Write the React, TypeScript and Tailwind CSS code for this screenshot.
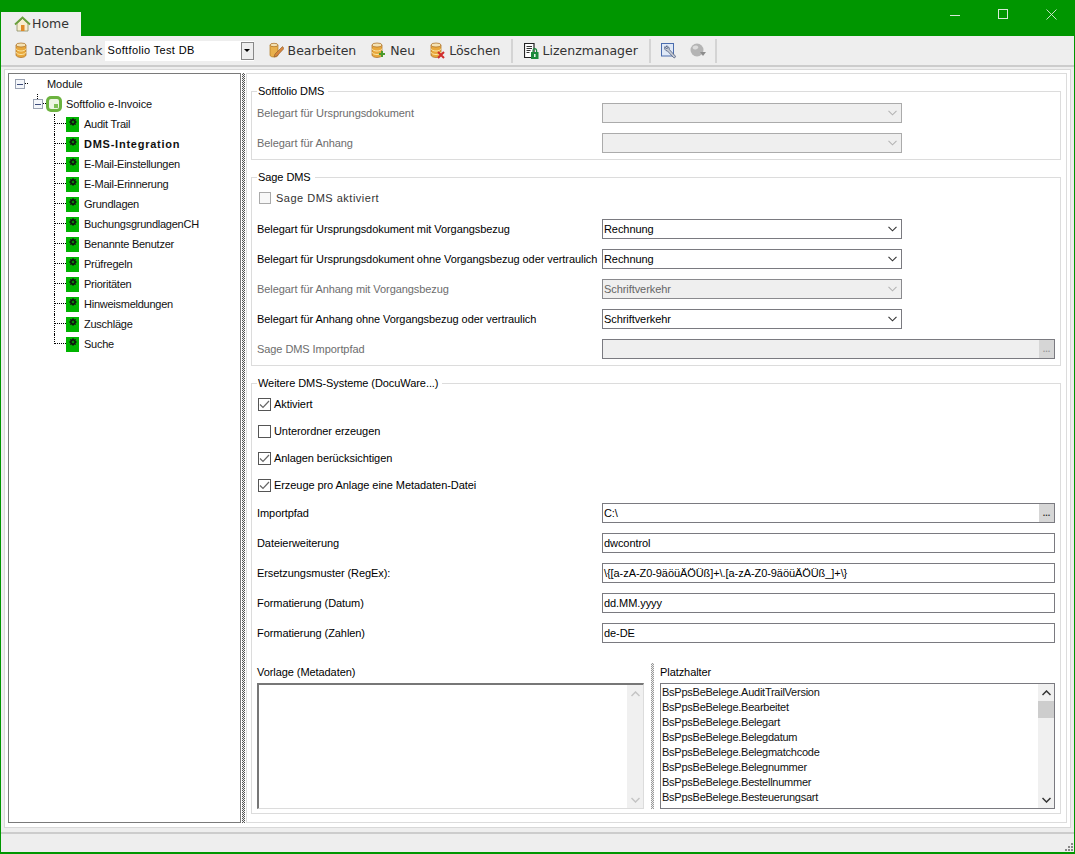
import type { ReactNode } from "react";

const treeItems = [
  "Audit Trail",
  "DMS-Integration",
  "E-Mail-Einstellungen",
  "E-Mail-Erinnerung",
  "Grundlagen",
  "BuchungsgrundlagenCH",
  "Benannte Benutzer",
  "Prüfregeln",
  "Prioritäten",
  "Hinweismeldungen",
  "Zuschläge",
  "Suche",
];

const placeholders = [
  "AuditTrailVersion",
  "Bearbeitet",
  "Belegart",
  "Belegdatum",
  "Belegmatchcode",
  "Belegnummer",
  "Bestellnummer",
  "Besteuerungsart",
  "Betrag",
];

function Db({ children }: { children?: ReactNode }) {
  return (
    <svg width="16" height="17" viewBox="0 0 16 17" className="shrink-0">
      <path d="M2 3v10c0 1.500 2.500 2.500 5 2.500s5-1 5-2.500V3z" fill="#e8a83c" stroke="#a8681c" strokeWidth="0.7" />
      <path d="M2 6.500c0 1.500 2.500 2.500 5 2.500s5-1 5-2.500M2 10c0 1.500 2.500 2.500 5 2.500s5-1 5-2.500" fill="none" stroke="#fbe7a8" />
      <ellipse cx="7" cy="3" rx="5" ry="2" fill="#f4e2b4" stroke="#a8681c" strokeWidth="0.7" />
      {children}
    </svg>
  );
}

function HomeIcon() {
  return (
    <svg width="17" height="16" viewBox="0 0 17 16" className="shrink-0">
      <path d="M3 7.500V15h11V7.500L8.500 2.500z" fill="#f6edd0" stroke="#8a8a60" strokeWidth="0.8" />
      <path d="M1 8.500 8.500 1.500 16 8.500" fill="none" stroke="#6aa03c" strokeWidth="1.800" />
      <rect x="7" y="9" width="3.500" height="6" fill="#e08a28" />
    </svg>
  );
}

function DocLockIcon() {
  return (
    <svg width="15" height="16" viewBox="0 0 15 16" className="shrink-0">
      <path d="M.5.500h9.500v14H.5z" fill="#fff" stroke="#222" strokeWidth="1.200" />
      <path d="M2.500 3.500h5.500M2.500 5.500h5.500M2.500 7.500h4M2.500 9.500h3" stroke="#333" strokeWidth="1" />
      <rect x="7" y="9" width="7.500" height="7" fill="#1c8a3c" />
      <path d="M9 9V7.500a1.800 1.800 0 0 1 3.600 0V9" fill="none" stroke="#1c8a3c" strokeWidth="1.200" />
      <path d="M10.800 11v3" stroke="#fff" strokeWidth="1.400" />
    </svg>
  );
}

function WrenchIcon() {
  return (
    <svg width="16" height="16" viewBox="0 0 16 16" className="shrink-0">
      <rect x=".5" y=".5" width="12" height="12.500" fill="#dfe8f6" stroke="#4a6cae" />
      <path d="M4 3.500a3 3 0 0 0 2.500 4.500l6 6.500c1 .8 2.500-.3 1.800-1.500L8.300 6.500A3 3 0 0 0 5 3l1.700 1.800-1 1.200z" fill="#c8ccd4" stroke="#4a5a7c" strokeWidth="0.8" />
    </svg>
  );
}

function GlobeIcon() {
  return (
    <svg width="16" height="16" viewBox="0 0 16 16" className="shrink-0">
      <circle cx="7" cy="7" r="6.500" fill="#b4b4b4" />
      <path d="M3 3.500c2-1.500 4-1.500 5 0s-1 3-3 3-3-1.500-2-3z" fill="#dcdcdc" />
      <path d="M10 9h6l-3 4z" fill="#8c8c8c" />
    </svg>
  );
}

function NodeIcon() {
  return (
    <span className="flex h-[15px] w-[13px] shrink-0 justify-center bg-[#00b400] pt-px">
      <svg width="8" height="8" viewBox="0 0 8 8">
        <circle cx="4" cy="4" r="2.200" fill="none" stroke="#111" strokeWidth="1.500" />
        <path d="M4 0v8M0 4h8M1.200 1.200l5.600 5.600M6.800 1.200 1.200 6.800" stroke="#111" strokeWidth="0.900" />
        <circle cx="4" cy="4" r="1" fill="#00b400" />
      </svg>
    </span>
  );
}

function LogoIcon() {
  return (
    <span className="flex size-4 shrink-0 items-center justify-center rounded-[5px] bg-[#6cb33f]">
      <span className="flex size-[10px] items-end justify-end rounded-[2px] bg-[#eef5e4] p-px">
        <span className="size-1 bg-[#7fbf55]" />
      </span>
    </span>
  );
}

function Expander({ stem }: { stem?: boolean }) {
  return (
    <span className="relative flex size-[10px] shrink-0 items-center justify-center border border-[#9aa2b2] bg-[#f4f6fa]">
      <span className="h-px w-[6px] bg-[#3c4c7c]" />
      <span className="absolute left-[9px] top-[3px] w-[3px] border-b border-dotted border-black" />
      {stem ? <span className="absolute -top-[6px] left-[3px] h-[5px] border-l border-dotted border-black" /> : null}
    </span>
  );
}

function Chevron({ disabled }: { disabled?: boolean }) {
  return (
    <svg width="9" height="6" viewBox="0 0 9 6" className="shrink-0">
      <path d="M.5.800 4.500 4.800 8.500.800" fill="none" stroke={disabled ? "#b4b4b4" : "#333"} strokeWidth="1.100" />
    </svg>
  );
}

function Combo({ value, disabled }: { value?: string; disabled?: boolean }) {
  const boxClass = disabled
    ? value
      ? "border-[#8a8a8e] bg-[#efefef] text-[#666]"
      : "border-[#ababab] bg-[#efefef]"
    : "border-[#7a7a80] bg-white text-black";
  return (
    <div className={`flex h-5 w-[300px] shrink-0 items-center justify-between border pl-[1px] pr-[4px] ${boxClass}`}>
      <span>{value}</span>
      <Chevron disabled={disabled} />
    </div>
  );
}

function DotsButton({ disabled }: { disabled?: boolean }) {
  return (
    <span
      className={`flex h-[18px] w-[15px] shrink-0 items-center justify-center bg-[#d6d6d6] text-[9px] font-bold leading-none ${disabled ? "text-[#999]" : "text-[#333]"}`}
    >
      ...
    </span>
  );
}

function TextField({ value, browse, disabled }: { value?: string; browse?: boolean; disabled?: boolean }) {
  return (
    <div
      className={`flex h-5 min-w-0 flex-1 items-center justify-between border border-[#7a7a80] pl-[1px] ${disabled ? "bg-[#efefef]" : "bg-white"}`}
    >
      <span className="whitespace-pre">{value}</span>
      {browse ? <DotsButton disabled={disabled} /> : null}
    </div>
  );
}

function Row({ label, muted, children }: { label: string; muted?: boolean; children: ReactNode }) {
  return (
    <div className="flex h-5 items-center">
      <span className={`w-[345px] shrink-0 whitespace-nowrap ${muted ? "text-[#6d6d6d]" : "text-black"}`}>{label}</span>
      {children}
    </div>
  );
}

function CheckRow({ label, checked }: { label: string; checked?: boolean }) {
  return (
    <div className="flex h-[27px] items-center gap-[3px]">
      <span className="ml-px flex size-[13px] shrink-0 items-center justify-center border border-[#555] bg-white">
        {checked ? (
          <svg width="11" height="9" viewBox="0 0 11 9">
            <path d="M1 4.500 4 7.500 10 1" fill="none" stroke="#666" strokeWidth="1.200" />
          </svg>
        ) : null}
      </span>
      <span>{label}</span>
    </div>
  );
}

function Group({ title, className, children }: { title: string; className?: string; children: ReactNode }) {
  return (
    <fieldset className={`min-w-0 border border-[#dcdcdc] pl-[5px] pr-[5px] ${className ?? ""}`}>
      <legend className="px-[1px] pr-1 leading-4 text-black">{title}</legend>
      {children}
    </fieldset>
  );
}

function Arrow({ up, light }: { up?: boolean; light?: boolean }) {
  return (
    <span className="flex h-[17px] items-center justify-center">
      <svg width="9" height="6" viewBox="0 0 9 6">
        <path
          d={up ? "M.5 5 4.500 1 8.500 5" : "M.5 1 4.500 5 8.500 1"}
          fill="none"
          stroke={light ? "#c4c4c4" : "#333"}
          strokeWidth="1.500"
        />
      </svg>
    </span>
  );
}

function Tree() {
  return (
    <div className="flex w-[233px] shrink-0 flex-col border border-[#7a7a7a] bg-white pl-[6px] text-[#111]">
      <div className="flex h-5 items-center">
        <Expander />
        <span className="ml-[22px]">Module</span>
      </div>
      <div className="flex h-5 items-center pl-[18px]">
        <Expander stem />
        <span className="ml-[3px]">
          <LogoIcon />
        </span>
        <span className="ml-[4px]">Softfolio e-Invoice</span>
      </div>
      {treeItems.map((item, index) => (
        <div key={item} className="flex h-5 pl-[39px]">
          <span
            className={`w-[12px] shrink-0 border-l border-dotted border-black ${index === treeItems.length - 1 ? "h-[10px]" : "h-5"}`}
          >
            <span className="block h-[10px] border-b border-dotted border-black" />
          </span>
          <span className="flex items-center gap-[5px]">
            <NodeIcon />
            <span className={item === "DMS-Integration" ? "font-bold tracking-[0.75px]" : "tracking-[-0.25px]"}>
              {item}
            </span>
          </span>
        </div>
      ))}
    </div>
  );
}

function ToolButton({ icon, label }: { icon: ReactNode; label: string }) {
  return (
    <div className="flex items-center gap-[4px]">
      {icon}
      <span className="translate-y-px font-['DejaVu_Sans',sans-serif] text-[12.500px] tracking-normal text-[#333]">
        {label}
      </span>
    </div>
  );
}

function Sep({ className }: { className: string }) {
  return <span className={`h-[24px] w-[2px] shrink-0 bg-[#d4d4d4] ${className}`} />;
}

export default function App() {
  return (
    <div className="flex h-[854px] w-[1075px] flex-col border-b-2 border-l border-r border-[#009600] bg-[#eeeeee] font-['Liberation_Sans',sans-serif] text-[11px] tracking-[-0.07px]">
      <header className="flex h-9 shrink-0 items-end justify-between bg-[#009600]">
        <div className="flex h-6 w-20 items-center gap-[1px] bg-[#eeeeee] pl-[13px] font-['DejaVu_Sans',sans-serif] text-[12.500px] tracking-normal text-[#333]">
          <HomeIcon />
          <span>Home</span>
        </div>
        <div className="flex h-9 items-center pb-[8px] pr-[17px]">
          <span className="mr-[38px] h-px w-[10px] translate-y-[1px] bg-[#d8e8d8]" />
          <span className="mr-[38px] size-[10px] border border-[#d8e8d8]" />
          <svg width="11" height="11" viewBox="0 0 11 11">
            <path d="M.5.500l10 10M10.500.500l-10 10" stroke="#d8e8d8" strokeWidth="0.900" />
          </svg>
        </div>
      </header>

      <div className="flex h-[29px] shrink-0 items-center pl-[13px]">
        <ToolButton icon={<Db />} label="Datenbank" />
        <div className="ml-[2px] flex h-5 w-[149px] items-center justify-between bg-white pl-[3px] text-[11px] tracking-[0.35px]">
          <span>Softfolio Test DB</span>
          <span className="flex h-[18px] w-[13px] items-center justify-center border border-[#888] bg-[#eee]">
            <span className="border-x-[3px] border-t-[3px] border-x-transparent border-t-black" />
          </span>
        </div>
        <div className="ml-[14px] flex items-center gap-[14px]">
          <ToolButton
            icon={
              <svg width="16" height="17" viewBox="0 0 16 17">
                <path d="M2 3v10c0 1.500 2 2 4 2s4-.5 4-2V3z" fill="#e8b04c" stroke="#b07820" strokeWidth="0.7" />
                <ellipse cx="6" cy="3" rx="4" ry="1.700" fill="#f4e2b4" stroke="#a8681c" strokeWidth="0.7" />
                <path d="M14.500 4.500 7 12l-1 3 3-1 7-7.500z" fill="#d8863c" stroke="#8a5a2c" strokeWidth="0.6" />
              </svg>
            }
            label="Bearbeiten"
          />
          <ToolButton
            icon={
              <Db>
                <path d="M12 9v6M9 12h6" stroke="#4c9a2c" strokeWidth="2" />
              </Db>
            }
            label="Neu"
          />
          <ToolButton
            icon={
              <Db>
                <path d="M9 10l6 6M15 10l-6 6" stroke="#d02c2c" strokeWidth="2" />
              </Db>
            }
            label="Löschen"
          />
        </div>
        <Sep className="mx-[10px]" />
        <span className="ml-px flex">
          <ToolButton icon={<DocLockIcon />} label="Lizenzmanager" />
        </span>
        <Sep className="ml-[11px] mr-[10px]" />
        <WrenchIcon />
        <span className="ml-[13px] flex">
          <GlobeIcon />
        </span>
        <Sep className="ml-[9px]" />
      </div>

      <div className="flex min-h-0 flex-1 flex-col border-t-2 border-[#cccccc] px-[3px] pt-[2px]">
        <div className="flex h-[759px] shrink-0 border border-[#d8d8d8] bg-white p-[3px] pb-1">
          <Tree />
          <div className="ml-[1px] w-[3px] shrink-0 bg-[repeating-conic-gradient(#555_0_25%,#eee_0_50%)] bg-[length:2px_2px]" />
          <div className="ml-[1px] min-w-0 flex-1 border border-[#dcdcdc] pl-[4px] pr-[5px] pt-[9px]">
            <Group title="Softfolio DMS" className="pb-[6px]">
              <div className="flex flex-col gap-[10px] pt-1">
                <Row label="Belegart für Ursprungsdokument" muted>
                  <Combo disabled />
                </Row>
                <Row label="Belegart für Anhang" muted>
                  <Combo disabled />
                </Row>
              </div>
            </Group>

            <Group title="Sage DMS" className="mt-[9px] pb-[6px]">
              <div className="flex flex-col gap-[10px] pt-[4px]">
                <div className="flex h-5 -translate-y-px items-center gap-[5px] text-[#333]">
                  <span className="ml-[2px] size-[12px] shrink-0 border border-[#aaa] bg-[#f8f8f8]" />
                  <span className="tracking-[0.5px]">Sage DMS aktiviert</span>
                </div>
                <Row label="Belegart für Ursprungsdokument mit Vorgangsbezug">
                  <Combo value="Rechnung" />
                </Row>
                <Row label="Belegart für Ursprungsdokument ohne Vorgangsbezug oder vertraulich">
                  <Combo value="Rechnung" />
                </Row>
                <Row label="Belegart für Anhang mit Vorgangsbezug" muted>
                  <Combo value="Schriftverkehr" disabled />
                </Row>
                <Row label="Belegart für Anhang ohne Vorgangsbezug oder vertraulich">
                  <Combo value="Schriftverkehr" />
                </Row>
                <Row label="Sage DMS Importpfad" muted>
                  <TextField browse disabled />
                </Row>
              </div>
            </Group>

            <Group title="Weitere DMS-Systeme (DocuWare...)" className="mt-[9px] pb-[4px]">
              <div>
                <CheckRow label="Aktiviert" checked />
                <CheckRow label="Unterordner erzeugen" />
                <CheckRow label="Anlagen berücksichtigen" checked />
                <CheckRow label="Erzeuge pro Anlage eine Metadaten-Datei" checked />
              </div>
              <div className="flex flex-col gap-[10px] pt-[4px]">
                <Row label="Importpfad">
                  <TextField value="C:\" browse />
                </Row>
                <Row label="Dateierweiterung">
                  <TextField value="dwcontrol" />
                </Row>
                <Row label="Ersetzungsmuster (RegEx):">
                  <TextField value="\{[a-zA-Z0-9äöüÄÖÜß]+\.[a-zA-Z0-9äöüÄÖÜß_]+\}" />
                </Row>
                <Row label="Formatierung (Datum)">
                  <TextField value="dd.MM.yyyy" />
                </Row>
                <Row label="Formatierung (Zahlen)">
                  <TextField value="de-DE" />
                </Row>
              </div>
              <div className="mt-[20px] flex h-[146px]">
                <div className="flex w-[387px] shrink-0 flex-col">
                  <span className="h-5 leading-[18px]">Vorlage (Metadaten)</span>
                  <div className="flex min-h-0 flex-1 justify-end border-b border-l-2 border-r border-t-2 border-b-[#dcdcdc] border-l-[#777] border-r-[#dcdcdc] border-t-[#777] bg-white">
                    <div className="flex w-4 flex-col justify-between bg-[#f0f0f0]">
                      <Arrow up light />
                      <Arrow light />
                    </div>
                  </div>
                </div>
                <div className="ml-[7px] w-[3px] shrink-0 bg-[repeating-conic-gradient(#999_0_25%,#eee_0_50%)] bg-[length:2px_2px]" />
                <div className="ml-[6px] flex min-w-0 flex-1 flex-col">
                  <span className="h-5 leading-[18px]">Platzhalter</span>
                  <div className="flex min-h-0 flex-1 overflow-hidden border border-[#7a7a80] bg-white">
                    <ul className="min-w-0 flex-1 pl-[1px] pt-px tracking-[-0.25px] text-[#111]">
                      {placeholders.map((name) => (
                        <li key={name} className="h-[15px] whitespace-nowrap leading-[15px]">
                          BsPpsBeBelege.{name}
                        </li>
                      ))}
                    </ul>
                    <div className="flex w-4 shrink-0 flex-col bg-[#f0f0f0]">
                      <Arrow up />
                      <span className="h-[17px] shrink-0 bg-[#cdcdcd]" />
                      <span className="flex-1" />
                      <Arrow />
                    </div>
                  </div>
                </div>
              </div>
            </Group>
          </div>
        </div>
      </div>

      <div className="flex h-5 shrink-0 items-end justify-end border-t-2 border-[#cccccc] pb-[1px] pr-[1px]">
        <div className="grid grid-cols-3 gap-[1px]">
          <span />
          <span />
          <span className="size-[2px] bg-[#888]" />
          <span />
          <span className="size-[2px] bg-[#888]" />
          <span className="size-[2px] bg-[#888]" />
          <span className="size-[2px] bg-[#888]" />
          <span className="size-[2px] bg-[#888]" />
          <span className="size-[2px] bg-[#888]" />
        </div>
      </div>
    </div>
  );
}
